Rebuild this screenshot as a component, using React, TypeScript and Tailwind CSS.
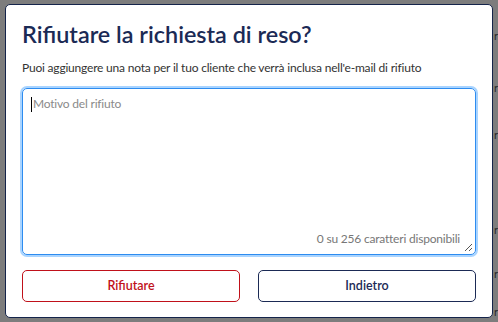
import React from 'react';

function BackdropEdge(): JSX.Element {
  // faint fragments of the page behind the overlay, peeking out on the right
  const tops = [30, 82, 129, 224, 268, 306];
  return (
    <>
      {tops.map((top) => (
        <span
          key={top}
          className="absolute left-[494px] text-[11px] leading-none text-[#2a2a2a]"
          style={{ top }}
        >
          r
        </span>
      ))}
    </>
  );
}

export default function App(): JSX.Element {
  return (
    <div
      className="relative w-[498px] h-[322px] overflow-hidden bg-[#7d7d7d] pt-[4px] pl-[5px]"
      style={{ fontFamily: 'Lato, "Noto Sans", sans-serif' }}
    >
      <BackdropEdge />
      <div className="relative w-[488px] h-[314px] bg-white border border-[#14244a] rounded-[5px] px-[16px] pt-[13px]">
        <h2 className="text-[23.4px] leading-[32px] font-semibold text-[#1b2a55]">
          Rifiutare la richiesta di reso?
        </h2>
        <p className="mt-[9px] text-[12px] leading-[18px] tracking-[-0.2px] text-[#333]">
          Puoi aggiungere una nota per il tuo cliente che verrà inclusa nell'e-mail di rifiuto
        </p>
        <div className="relative mt-[11px] h-[167px] rounded-[5px] border border-[#2d8cf0] ring-[2px] ring-[#a9d4ff]">
          <div className="flex items-center pl-[8px] pt-[6px] text-[12px] tracking-[-0.2px] text-[#8a8a8a]">
            <span className="w-px h-[15px] bg-black" />
            <span className="ml-px">Motivo del rifiuto</span>
          </div>
          <span className="absolute right-[15px] bottom-[6px] text-[12px] tracking-[-0.2px] text-[#777]">
            0 su 256 caratteri disponibili
          </span>
          <svg className="absolute right-[2px] bottom-[2px]" width="9" height="9" viewBox="0 0 9 9">
            <path d="M8 1 L1 8 M8 5 L5 8" stroke="#555" strokeWidth="1" />
          </svg>
        </div>
        <div className="mt-[15px] grid grid-cols-2 gap-[18px]">
          <button className="h-[32px] rounded-[5px] border border-[#c0111a] text-[12.5px] font-semibold text-[#c0111a]">
            Rifiutare
          </button>
          <button className="h-[32px] rounded-[5px] border border-[#1b2a55] text-[12.5px] font-semibold text-[#1b2a55]">
            Indietro
          </button>
        </div>
      </div>
    </div>
  );
}
